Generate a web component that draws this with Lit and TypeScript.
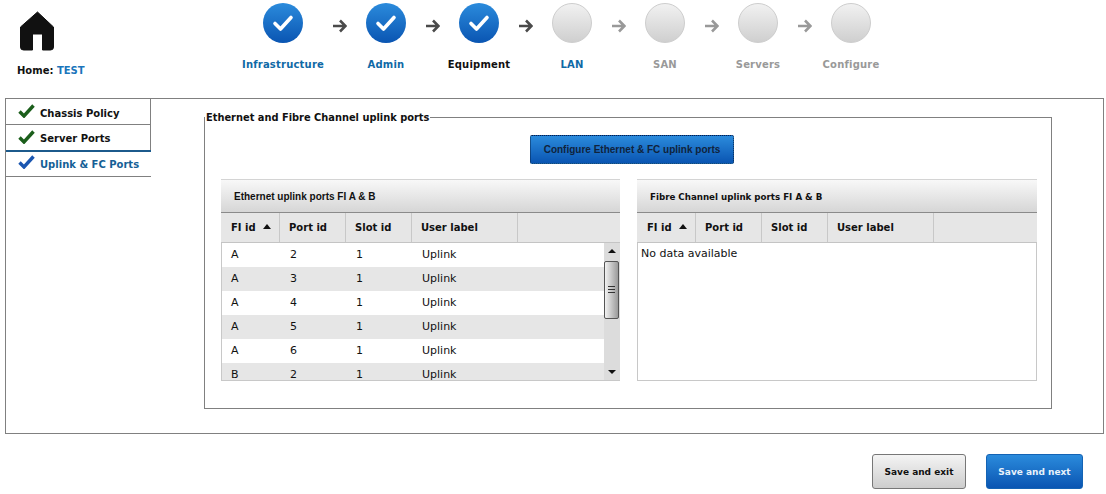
import { LitElement, html, css, svg } from 'lit';
import { customElement } from 'lit/decorators.js';

interface Step {
  label: string;
  done: boolean;
  tone: 'link' | 'current' | 'off';
  wide?: boolean;
}

const STEPS: Step[] = [
  { label: 'Infrastructure', done: true, tone: 'link', wide: true },
  { label: 'Admin', done: true, tone: 'link' },
  { label: 'Equipment', done: true, tone: 'current' },
  { label: 'LAN', done: false, tone: 'link' },
  { label: 'SAN', done: false, tone: 'off' },
  { label: 'Servers', done: false, tone: 'off' },
  { label: 'Configure', done: false, tone: 'off' },
];

const ROWS = [
  ['A', '2', '1', 'Uplink'],
  ['A', '3', '1', 'Uplink'],
  ['A', '4', '1', 'Uplink'],
  ['A', '5', '1', 'Uplink'],
  ['A', '6', '1', 'Uplink'],
  ['B', '2', '1', 'Uplink'],
];

const TABS = [
  { label: 'Chassis Policy', active: false },
  { label: 'Server Ports', active: false },
  { label: 'Uplink & FC Ports', active: true },
];

const HEADERS = ['FI id', 'Port id', 'Slot id', 'User label', ''];

const homeIcon = svg`<path d="M17 1 L33 16 V36 Q33 39 30 39 H22 V23 H12 V39 H3 Q0 39 0 36 V16 Z" fill="#111" stroke="#111" stroke-width="1" stroke-linejoin="round"/>`;

@customElement('app-root')
export class AppRoot extends LitElement {
  static styles = css`
    :host {
      display: block;
      width: 1106px;
      height: 494px;
      overflow: hidden;
      background: #fff;
      font-family: 'DejaVu Sans', Verdana, sans-serif;
      font-size: 11px;
      color: #111;
    }

    /* Header */
    .header {
      display: flex;
      height: 98px;
    }
    .home {
      width: 241px;
      flex: none;
      padding: 11px 0 0 17px;
      box-sizing: border-box;
    }
    .home svg {
      display: block;
      margin-left: 3px;
      width: 34px;
      height: 40px;
    }
    .home-label {
      margin-top: 13px;
      font-size: 10px;
      font-weight: 700;
      line-height: 13px;
    }
    .home-label span {
      color: #1b75bb;
    }
    .stepper {
      display: flex;
      align-items: flex-start;
      padding-top: 3px;
    }
    .step {
      width: 64px;
      display: flex;
      flex-direction: column;
      align-items: center;
    }
    .step.wide {
      width: 84px;
    }
    .circle {
      width: 40px;
      height: 40px;
      border-radius: 50%;
      box-sizing: border-box;
      display: flex;
      align-items: center;
      justify-content: center;
    }
    .circle.done {
      background: linear-gradient(#2b8bdc, #0a55b2);
    }
    .circle.todo {
      background: linear-gradient(#f1f1f1, #cfcfcf);
      border: 1px solid #cdcdcd;
    }
    .step-label {
      margin-top: 15px;
      font-size: 10px;
      letter-spacing: 0.2px;
      font-weight: 700;
      line-height: 13px;
      white-space: nowrap;
    }
    .link {
      color: #0f69a6;
    }
    .current {
      color: #111;
    }
    .off {
      color: #999;
    }
    .arrow {
      width: 29px;
      height: 40px;
      flex: none;
      display: flex;
      align-items: center;
      justify-content: center;
      padding-top: 6px;
      box-sizing: border-box;
    }

    /* Main box */
    .main {
      display: flex;
      margin-left: 5px;
      width: 1099px;
      height: 336px;
      box-sizing: border-box;
      border: 1px solid #808080;
    }
    .side {
      width: 145px;
      flex: none;
    }
    .tab {
      display: flex;
      align-items: center;
      gap: 5px;
      height: 23px;
      padding: 2px 0 0 12px;
      box-sizing: content-box;
      border-right: 1px solid #808080;
      border-bottom: 1px solid #808080;
      font-size: 10px;
      font-weight: 700;
    }
    .tab:first-child {
      height: 22px;
      padding-top: 3px;
    }
    .tab svg {
      margin-top: -4px;
    }
    .tab.active {
      height: 24px;
      padding-top: 0;
      color: #155f96;
      border-right: none;
      border-top: 2px solid #1c5a8c;
      margin-top: -1px;
    }
    .content {
      flex: 1;
      padding: 12px 0 0 53px;
    }
    fieldset {
      width: 848px;
      height: 298px;
      box-sizing: border-box;
      margin: 0;
      padding: 0 0 0 16px;
      border: 1px solid #808080;
    }
    legend {
      padding: 0 1px;
      margin-left: -16px;
      font-size: 9.85px;
      font-weight: 700;
      line-height: 13px;
    }
    .config-row {
      display: flex;
      justify-content: center;
      margin: 11px 0 15px;
      padding-right: 8px;
    }
    .config {
      width: 204px;
      height: 29px;
      box-sizing: border-box;
      border: 1px dotted #06244a;
      border-radius: 2px;
      background: linear-gradient(#2b8bdc, #0a55b2);
      color: #10233c;
      font: 700 10px/27px 'Liberation Sans', Arial, sans-serif;
      text-align: center;
      white-space: nowrap;
    }
    .tables {
      display: flex;
      gap: 17px;
    }

    /* Port tables */
    .panel {
      width: 399px;
      height: 202px;
      display: flex;
      flex-direction: column;
    }
    .panel.right {
      width: 400px;
    }
    .title {
      height: 32px;
      flex: none;
      padding-left: 13px;
      border-top: 1px solid #d4d4d4;
      border-bottom: 1px solid #8a8a8a;
      box-sizing: content-box;
      background: linear-gradient(#f8f8f8, #d6d6d6);
      font: 700 10px/34px 'Liberation Sans', Arial, sans-serif;
      white-space: nowrap;
    }
    .right .title {
      font: 700 8.7px/34px 'DejaVu Sans', Verdana, sans-serif;
    }
    .heads {
      display: grid;
      grid-template-columns: 59px 66px 66px 106px 1fr;
      height: 29px;
      flex: none;
      background: #e6e6e6;
      border-bottom: 1px solid #c4c4c4;
      font-size: 10px;
      font-weight: 700;
      line-height: 29px;
    }
    .head {
      padding-left: 9px;
      border-right: 1px solid #c8c8c8;
      display: flex;
      align-items: center;
      gap: 7px;
    }
    .head:first-child {
      padding-left: 10px;
    }
    .head:last-child {
      border-right: none;
    }
    .sort {
      width: 0;
      height: 0;
      border-left: 4px solid transparent;
      border-right: 4px solid transparent;
      border-bottom: 5px solid #111;
      margin-top: -2px;
    }
    .body {
      flex: 1;
      min-height: 0;
      display: flex;
      border: 1px solid #c8c8c8;
      border-top: none;
      border-right: none;
      overflow: hidden;
    }
    .right .body {
      display: block;
      border-right: 1px solid #c8c8c8;
      padding: 4px 0 0 3px;
      line-height: 13px;
    }
    .rows {
      flex: 1;
      overflow: hidden;
    }
    .row {
      display: grid;
      grid-template-columns: 59px 66px 66px 1fr;
      height: 24px;
      line-height: 24px;
    }
    .row:nth-child(even) {
      background: #e6e6e6;
    }
    .row span {
      padding-left: 9px;
    }

    /* Scrollbar */
    .scroll {
      width: 16px;
      flex: none;
      background: #dcdcdc;
      position: relative;
    }
    .scroll .up,
    .scroll .down {
      position: absolute;
      left: 4px;
      width: 0;
      height: 0;
      border-left: 4px solid transparent;
      border-right: 4px solid transparent;
    }
    .scroll .up {
      top: 6px;
      border-bottom: 4px solid #111;
    }
    .scroll .down {
      bottom: 6px;
      border-top: 4px solid #111;
    }
    .thumb {
      position: absolute;
      left: 0;
      top: 18px;
      width: 15px;
      height: 58px;
      box-sizing: border-box;
      border: 1px solid #555;
      border-radius: 2px;
      background: linear-gradient(90deg, #f2f2f2, #9a9a9a);
    }
    .grip {
      position: absolute;
      left: 3px;
      top: 24px;
      width: 7px;
      height: 7px;
      background: repeating-linear-gradient(#333 0 1px, transparent 1px 3px);
    }

    /* Footer */
    .footer {
      display: flex;
      justify-content: flex-end;
      gap: 20px;
      padding: 20px 23px 0 0;
    }
    .btn {
      height: 35px;
      box-sizing: border-box;
      border-radius: 3px;
      font: 700 9px/35px 'DejaVu Sans', Verdana, sans-serif;
      text-align: center;
    }
    .btn.exit {
      width: 94px;
      border: 1px solid #777;
      background: linear-gradient(#f4f4f4, #cdcdcd);
      color: #111;
    }
    .btn.next {
      width: 97px;
      border: 1px solid #1463b4;
      background: linear-gradient(#2b8bdc, #0a55b2);
      color: #e8f2fb;
    }
  `;

  private renderStep(step: Step, last: boolean) {
    const arrowColor = step.tone === 'off' || step.label === 'LAN' ? '#999' : '#4a4a4a';
    return html`
      <div class="step ${step.wide ? 'wide' : ''}">
        <div class="circle ${step.done ? 'done' : 'todo'}">
          ${step.done
            ? html`<svg width="22" height="18" viewBox="0 0 22 18">
                <path d="M3 9.5 L8.5 15 L19 3.5" fill="none" stroke="#fff" stroke-width="3.6" stroke-linecap="round" stroke-linejoin="round" />
              </svg>`
            : ''}
        </div>
        <div class="step-label ${step.tone}">${step.label}</div>
      </div>
      ${last
        ? ''
        : html`<div class="arrow">
            <svg width="15" height="14" viewBox="0 0 15 14">
              <path d="M1 7 H13 M8 1.5 L13.5 7 L8 12.5" fill="none" stroke="${arrowColor}" stroke-width="2.6" />
            </svg>
          </div>`}
    `;
  }

  private renderHeads() {
    return html`
      <div class="heads">
        ${HEADERS.map(
          (h, i) => html`<div class="head">${h}${i === 0 ? html`<span class="sort"></span>` : ''}</div>`
        )}
      </div>
    `;
  }

  render() {
    return html`
      <div class="header">
        <div class="home">
          <svg viewBox="-0.5 0 34 40">${homeIcon}</svg>
          <div class="home-label">Home: <span>TEST</span></div>
        </div>
        <div class="stepper">
          ${STEPS.map((s, i) => this.renderStep(s, i === STEPS.length - 1))}
        </div>
      </div>

      <div class="main">
        <div class="side">
          ${TABS.map(
            (t) => html`
              <div class="tab ${t.active ? 'active' : ''}">
                <svg width="17" height="14" viewBox="0 0 17 14">
                  <path d="M1.5 7.5 L6 12 L15.5 1.5" fill="none" stroke="${t.active ? '#1a56b0' : '#1b5e1b'}" stroke-width="3.4" />
                </svg>
                ${t.label}
              </div>
            `
          )}
        </div>
        <div class="content">
          <fieldset>
            <legend>Ethernet and Fibre Channel uplink ports</legend>
            <div class="config-row">
              <div class="config">Configure Ethernet &amp; FC uplink ports</div>
            </div>
            <div class="tables">
              <div class="panel">
                <div class="title">Ethernet uplink ports FI A &amp; B</div>
                ${this.renderHeads()}
                <div class="body">
                  <div class="rows">
                    ${ROWS.map(
                      (r) => html`<div class="row">${r.map((c) => html`<span>${c}</span>`)}</div>`
                    )}
                  </div>
                  <div class="scroll">
                    <span class="up"></span>
                    <div class="thumb"><div class="grip"></div></div>
                    <span class="down"></span>
                  </div>
                </div>
              </div>
              <div class="panel right">
                <div class="title">Fibre Channel uplink ports FI A &amp; B</div>
                ${this.renderHeads()}
                <div class="body">No data available</div>
              </div>
            </div>
          </fieldset>
        </div>
      </div>

      <div class="footer">
        <div class="btn exit">Save and exit</div>
        <div class="btn next">Save and next</div>
      </div>
    `;
  }
}

declare global {
  interface HTMLElementTagNameMap {
    'app-root': AppRoot;
  }
}
